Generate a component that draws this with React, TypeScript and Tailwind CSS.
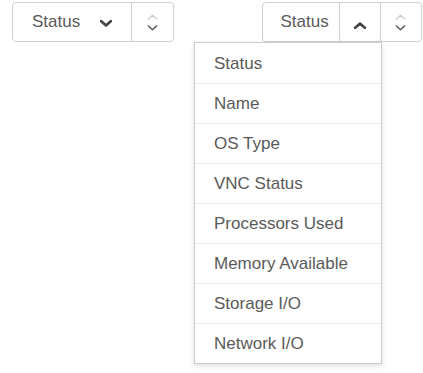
import React from "react";

const items = [
  "Status",
  "Name",
  "OS Type",
  "VNC Status",
  "Processors Used",
  "Memory Available",
  "Storage I/O",
  "Network I/O",
];

function Chevron({ up, className, strokeWidth }: { up?: boolean; className?: string; strokeWidth: number }) {
  return (
    <svg width="12" height="7" viewBox="0 0 12 7" className={className} fill="none">
      <polyline
        points={up ? "1,6 6,1.5 11,6" : "1,1 6,5.5 11,1"}
        stroke="currentColor"
        strokeWidth={strokeWidth}
        strokeLinecap="round"
        strokeLinejoin="round"
      />
    </svg>
  );
}

function Spinner() {
  return (
    <div className="flex w-[41px] flex-col items-center justify-center gap-[5px] pt-[1px]">
      <Chevron up strokeWidth={1.3} className="h-[6px] w-[11px] text-[#c8c8c8]" />
      <Chevron strokeWidth={1.6} className="h-[6px] w-[11px] text-[#555]" />
    </div>
  );
}

export default function App() {
  return (
    <div
      className="h-[373px] w-[423px] bg-white pt-[2px] pl-[12px] text-[17px] text-[#5a5a5a]"
      style={{ fontFamily: '"Liberation Sans", Arial, sans-serif' }}
    >
      <div className="flex">
        <div className="flex h-[40px] w-[162px] rounded-[4px] border border-[#cfcfcf] bg-white">
          <div className="flex w-[120px] items-center border-r border-[#cfcfcf] pl-[19px]">
            <span>Status</span>
            <Chevron strokeWidth={2.6} className="mt-[3px] ml-[20px] h-[7px] w-[12px] text-[#444]" />
          </div>
          <Spinner />
        </div>

        <div className="relative ml-[88px] flex h-[40px] w-[160px] rounded-[4px] border border-[#cfcfcf] bg-white">
          <div className="flex w-[78px] items-center justify-center border-r border-[#cfcfcf] pl-[7px] pb-[1px]">
            Status
          </div>
          <div className="flex w-[41px] items-center justify-center border-r border-[#cfcfcf] pt-[7px]">
            <Chevron up strokeWidth={2.6} className="h-[7px] w-[12px] text-[#444]" />
          </div>
          <Spinner />

          <div className="absolute top-[39px] left-[-69px] z-10 w-[188px] border border-[#cbcbcb] bg-white shadow-[0_2px_5px_rgba(0,0,0,0.12)]">
            {items.map((item, i) => (
              <div
                key={item}
                className={
                  i === 0
                    ? "flex h-[40px] items-center pt-[1px] pl-[19px]"
                    : "flex h-[40px] items-center border-t border-[#ececec] pt-[1px] pl-[19px]"
                }
              >
                {item}
              </div>
            ))}
          </div>
        </div>
      </div>
    </div>
  );
}
